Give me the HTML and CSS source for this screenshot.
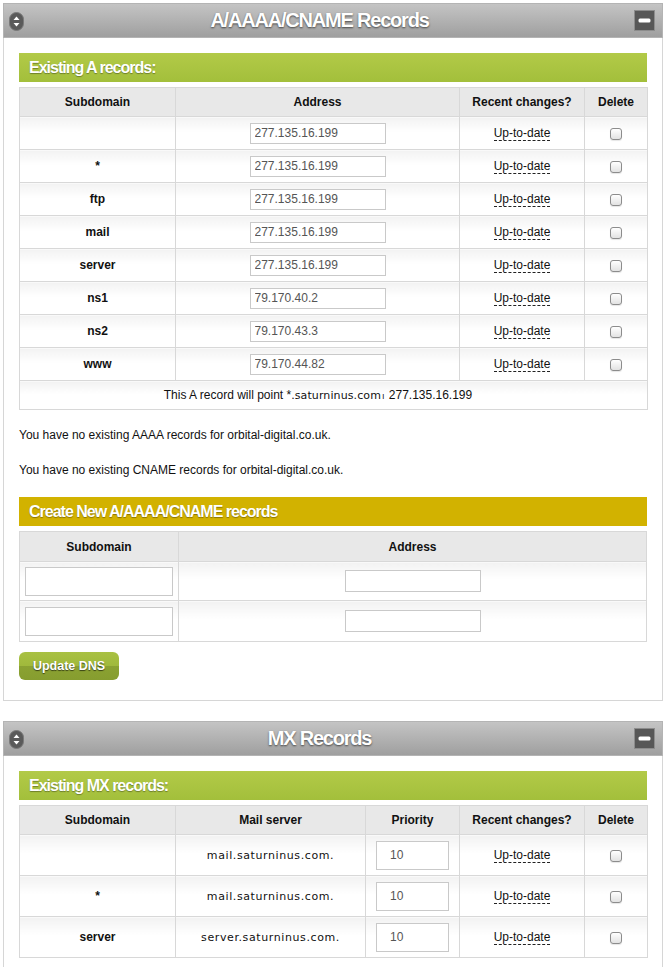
FILE: index.html
```html
<!DOCTYPE html>
<html>
<head>
<meta charset="utf-8">
<title>DNS</title>
<link rel="stylesheet" href="styles.css">
</head>
<body>
<div class="page">

<section class="panel">
  <header class="panel-head">
    <span class="pill"><svg width="15" height="19" viewBox="0 0 15 19"><rect x="0.5" y="0.5" width="14" height="18" rx="7" fill="#5a5a5a" stroke="#7a7a7a"/><path d="M7.5 4.5 L10.5 8 L4.5 8 Z" fill="#fff"/><path d="M7.5 14.5 L10.5 11 L4.5 11 Z" fill="#fff"/></svg></span>
    <h1 class="panel-title">A/AAAA/CNAME Records</h1>
    <span class="minus"><svg width="21" height="21" viewBox="0 0 21 21"><rect x="0.5" y="0.5" width="20" height="20" fill="#575757" stroke="#8c8c8c"/><rect x="4.5" y="8.5" width="12" height="4" rx="1.5" fill="#fff"/></svg></span>
  </header>
  <div class="panel-body">
    <h2 class="bar bar-green">Existing A records:</h2>
    <table class="grid grid-a">
      <colgroup><col class="c-sub"><col class="c-addr"><col class="c-rc"><col class="c-del"></colgroup>
      <thead><tr><th>Subdomain</th><th>Address</th><th>Recent changes?</th><th>Delete</th></tr></thead>
      <tbody>
        <tr><td class="sub"></td><td><input class="in-addr" type="text" value="277.135.16.199"></td><td><span class="utd">Up-to-date</span></td><td><input class="chk" type="checkbox"></td></tr>
        <tr><td class="sub">*</td><td><input class="in-addr" type="text" value="277.135.16.199"></td><td><span class="utd">Up-to-date</span></td><td><input class="chk" type="checkbox"></td></tr>
        <tr><td class="sub">ftp</td><td><input class="in-addr" type="text" value="277.135.16.199"></td><td><span class="utd">Up-to-date</span></td><td><input class="chk" type="checkbox"></td></tr>
        <tr><td class="sub">mail</td><td><input class="in-addr" type="text" value="277.135.16.199"></td><td><span class="utd">Up-to-date</span></td><td><input class="chk" type="checkbox"></td></tr>
        <tr><td class="sub">server</td><td><input class="in-addr" type="text" value="277.135.16.199"></td><td><span class="utd">Up-to-date</span></td><td><input class="chk" type="checkbox"></td></tr>
        <tr><td class="sub">ns1</td><td><input class="in-addr" type="text" value="79.170.40.2"></td><td><span class="utd">Up-to-date</span></td><td><input class="chk" type="checkbox"></td></tr>
        <tr><td class="sub">ns2</td><td><input class="in-addr" type="text" value="79.170.43.3"></td><td><span class="utd">Up-to-date</span></td><td><input class="chk" type="checkbox"></td></tr>
        <tr><td class="sub">www</td><td><input class="in-addr" type="text" value="79.170.44.82"></td><td><span class="utd">Up-to-date</span></td><td><input class="chk" type="checkbox"></td></tr>
        <tr class="foot"><td colspan="4">This A record will point *<span class="dom">.saturninus.com</span><span class="arr">ı</span> 277.135.16.199</td></tr>
      </tbody>
    </table>
    <p class="note first">You have no existing AAAA records for orbital-digital.co.uk.</p>
    <p class="note">You have no existing CNAME records for orbital-digital.co.uk.</p>
    <h2 class="bar bar-yellow">Create New A/AAAA/CNAME records</h2>
    <table class="grid grid-new">
      <colgroup><col class="c-nsub"><col></colgroup>
      <thead><tr><th>Subdomain</th><th>Address</th></tr></thead>
      <tbody>
        <tr class="r1"><td><input class="in-nsub" type="text"></td><td><input class="in-naddr" type="text"></td></tr>
        <tr><td><input class="in-nsub" type="text"></td><td><input class="in-naddr" type="text"></td></tr>
      </tbody>
    </table>
    <button class="btn" type="button">Update DNS</button>
  </div>
</section>

<section class="panel panel-mx">
  <header class="panel-head">
    <span class="pill"><svg width="15" height="19" viewBox="0 0 15 19"><rect x="0.5" y="0.5" width="14" height="18" rx="7" fill="#5a5a5a" stroke="#7a7a7a"/><path d="M7.5 4.5 L10.5 8 L4.5 8 Z" fill="#fff"/><path d="M7.5 14.5 L10.5 11 L4.5 11 Z" fill="#fff"/></svg></span>
    <h1 class="panel-title">MX Records</h1>
    <span class="minus"><svg width="21" height="21" viewBox="0 0 21 21"><rect x="0.5" y="0.5" width="20" height="20" fill="#575757" stroke="#8c8c8c"/><rect x="4.5" y="8.5" width="12" height="4" rx="1.5" fill="#fff"/></svg></span>
  </header>
  <div class="panel-body">
    <h2 class="bar bar-green">Existing MX records:</h2>
    <table class="grid grid-mx">
      <colgroup><col class="c-sub"><col class="c-mail"><col class="c-pri"><col class="c-rc"><col class="c-del"></colgroup>
      <thead><tr><th>Subdomain</th><th>Mail server</th><th>Priority</th><th>Recent changes?</th><th>Delete</th></tr></thead>
      <tbody>
        <tr><td class="sub"></td><td class="mail">mail.saturninus.com.</td><td><input class="in-pri" type="text" value="10"></td><td><span class="utd">Up-to-date</span></td><td><input class="chk" type="checkbox"></td></tr>
        <tr><td class="sub">*</td><td class="mail">mail.saturninus.com.</td><td><input class="in-pri" type="text" value="10"></td><td><span class="utd">Up-to-date</span></td><td><input class="chk" type="checkbox"></td></tr>
        <tr><td class="sub">server</td><td class="mail">server.saturninus.com.</td><td><input class="in-pri" type="text" value="10"></td><td><span class="utd">Up-to-date</span></td><td><input class="chk" type="checkbox"></td></tr>
      </tbody>
    </table>
  </div>
</section>

</div>
</body>
</html>
```

FILE: styles.css
```css
html, body {
  margin: 0;
  padding: 0;
  background: #fff;
}
body {
  font-family: "Liberation Sans", Arial, sans-serif;
  font-size: 12px;
  color: #111;
}
.page {
  padding: 3px 4px 0 3px;
  display: flex;
  flex-direction: column;
  gap: 20px;
}
.panel {
  border: 1px solid #d6d6d6;
  border-top: 0;
  background: #fff;
}
.panel-head {
  height: 35px;
  box-sizing: border-box;
  border: 1px solid #b4b4b4;
  margin: 0 -1px;
  background: linear-gradient(#c4c4c4, #9f9f9f);
  display: flex;
  align-items: center;
  justify-content: space-between;
  padding: 0 7px 0 5px;
}
.pill, .minus {
  display: flex;
  width: 21px;
}
.minus { justify-content: flex-end; }
.pill svg, .minus svg { display: block; }
.pill { margin-top: 1px; }
.minus { margin-top: -1px; }
.panel-title {
  margin: 0 0 0 -25px;
  font-size: 20px;
  font-weight: bold;
  letter-spacing: -1.2px;
  color: #fff;
  text-shadow: 0 1px 2px rgba(0,0,0,0.6);
}
.panel-body {
  padding: 15px 15px 20px;
  display: flex;
  flex-direction: column;
  align-items: flex-start;
}
.bar {
  align-self: stretch;
  margin: 0;
  height: 29px;
  line-height: 29px;
  padding-left: 10px;
  font-size: 16px;
  font-weight: bold;
  letter-spacing: -1px;
  color: #fff;
  text-shadow: 0 1px 1px rgba(0,0,0,0.35);
}
.bar-green {
  background: linear-gradient(#b2ca48, #a3bf3b);
}
.bar-yellow {
  background: #d2b200;
  margin-top: 19px;
}
.grid {
  align-self: stretch;
  width: 628px;
  border-collapse: collapse;
  table-layout: fixed;
  margin-top: 5px;
}
.grid th, .grid td {
  border: 1px solid #d8d8d8;
  padding: 0;
  text-align: center;
  vertical-align: middle;
}
.grid th {
  background: #e8e8e8;
  font-weight: bold;
  font-size: 12px;
  color: #111;
  height: 28px;
}
.grid td {
  background: linear-gradient(#f2f2f2, #ffffff 45%);
  height: 32px;
  color: #111;
}
.c-sub { width: 156px; }
.c-addr { width: 284px; }
.c-rc { width: 125px; }
.c-del { width: 63px; }
.c-nsub { width: 159px; }
.c-mail { width: 190px; }
.c-pri { width: 94px; }
.sub { font-weight: bold; }
input[type="text"] {
  box-sizing: border-box;
  border: 1px solid #c9c9c9;
  background: #fff;
  font-family: "Liberation Sans", Arial, sans-serif;
  font-size: 12px;
  color: #555;
  margin: 0;
  vertical-align: middle;
  outline: none;
}
.in-addr {
  width: 136px;
  height: 21px;
  padding: 0 0 0 4px;
}
.utd {
  border-bottom: 1px dashed #222;
  color: #111;
  line-height: 13px;
  display: inline-block;
}
.chk {
  appearance: none;
  -webkit-appearance: none;
  width: 12px;
  height: 12px;
  margin: 0;
  border: 1px solid #8c8c8c;
  border-radius: 3px;
  background: linear-gradient(#ffffff, #e2e2e2);
  vertical-align: middle;
  box-shadow: 0 1px 1px rgba(0,0,0,0.1);
}
.grid-a .foot td {
  height: 28px;
  font-size: 12px;
  padding-right: 31px;
}
.dom {
  font-family: "DejaVu Sans", sans-serif;
  font-size: 11px;
  letter-spacing: 0.1px;
}
.arr {
  font-size: 9px;
  margin: 0 1px;
}
.note {
  margin: 18px 0 0;
  line-height: 15px;
  font-size: 12px;
  color: #111;
}
.note + .note { margin-top: 20px; }
.grid-new th { height: 29px; }
.grid-new td { height: 40px; }
.grid-new .r1 td { height: 38px; }
.in-nsub {
  width: 148px;
  height: 29px;
}
.in-naddr {
  width: 136px;
  height: 22px;
}
.btn {
  margin-top: 10px;
  width: 100px;
  height: 28px;
  border: 0;
  border-radius: 6px;
  background: linear-gradient(#a9c143 0%, #a0b93c 50%, #8ba232 50%, #869d2f 100%);
  color: #fff;
  font-family: "Liberation Sans", Arial, sans-serif;
  font-size: 12.5px;
  font-weight: bold;
  letter-spacing: 0;
  text-shadow: 0 1px 1px rgba(0,0,0,0.6);
  padding: 0;
}
.grid-mx td { height: 40px; }
.mail {
  font-family: "DejaVu Sans", sans-serif;
  font-size: 11px;
  letter-spacing: 0.6px;
  color: #000;
}
.in-pri {
  width: 73px;
  height: 29px;
  padding: 0 0 0 13px;
}
```
